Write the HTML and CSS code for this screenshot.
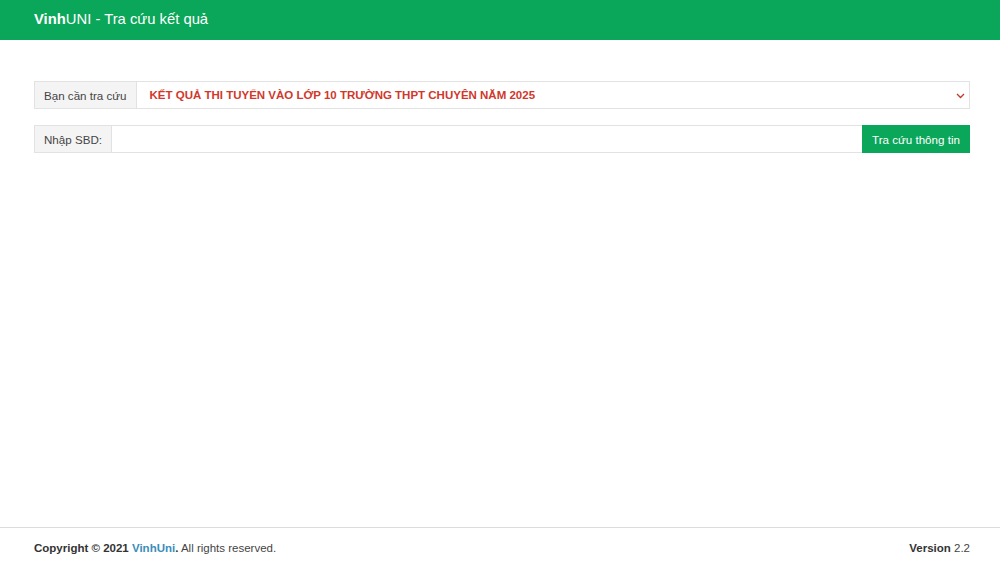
FILE: index.html
```html
<!DOCTYPE html>
<html lang="vi">
<head>
    <meta charset="UTF-8">
    <meta name="viewport" content="width=device-width, initial-scale=1.0">
    <title>VinhUNI - Tra cứu kết quả</title>
    <link rel="stylesheet" href="styles.css">
</head>
<body>
    <div class="page">
        <header class="topbar">
            <div class="brand"><b>Vinh</b>UNI - Tra cứu kết quả</div>
        </header>

        <main class="content">
            <div class="input-group">
                <span class="addon">Bạn cần tra cứu</span>
                <div class="select-box">
                    <span class="select-text">KẾT QUẢ THI TUYỂN VÀO LỚP 10 TRƯỜNG THPT CHUYÊN NĂM 2025</span>
                    <svg class="chevron" width="9" height="6" viewBox="0 0 9 6">
                        <path d="M1 1 L4.5 4.5 L8 1" fill="none" stroke="#c0392b" stroke-width="1.3"/>
                    </svg>
                </div>
            </div>

            <div class="input-group">
                <span class="addon">Nhập SBD:</span>
                <input class="sbd" type="text">
                <button class="btn-search">Tra cứu thông tin</button>
            </div>
        </main>

        <footer class="footer">
            <div class="copy"><b>Copyright &copy; 2021 <span class="link">VinhUni</span>.</b> All rights reserved.</div>
            <div class="version"><b>Version</b> 2.2</div>
        </footer>
    </div>
</body>
</html>
```

FILE: styles.css
```css
* {
    margin: 0;
    padding: 0;
    box-sizing: border-box;
}

body {
    font-family: "Liberation Sans", Arial, sans-serif;
    color: #333;
    background: #fff;
}

.page {
    display: flex;
    flex-direction: column;
    min-height: 100vh;
}

.topbar {
    background: #0aa659;
    height: 40px;
    display: flex;
    align-items: center;
    padding: 0 34px;
}

.brand {
    color: #fff;
    font-size: 14.8px;
    padding-bottom: 3px;
}

.content {
    padding: 41px 30px 0 34px;
}

.input-group {
    display: flex;
    height: 28px;
    margin-bottom: 16px;
}

.addon {
    display: flex;
    align-items: center;
    padding: 0 9px;
    background: #f4f4f4;
    border: 1px solid #e2e2e2;
    font-size: 11.6px;
    color: #444;
    white-space: nowrap;
}

.select-box {
    flex: 1;
    display: flex;
    align-items: center;
    justify-content: space-between;
    border: 1px solid #e2e2e2;
    border-left: none;
    padding: 0 4px 0 13px;
}

.select-text {
    color: #d0382b;
    font-weight: bold;
    font-size: 11.5px;
}

.chevron {
    margin-top: 1px;
}

.sbd {
    flex: 1;
    border: 1px solid #e2e2e2;
    border-left: none;
    border-right: none;
    outline: none;
    font-size: 12px;
    padding: 0 8px;
}

.btn-search {
    background: #0aa659;
    color: #fff;
    border: none;
    font-family: inherit;
    font-size: 11.6px;
    width: 108px;
    white-space: nowrap;
    cursor: pointer;
}

.footer {
    margin-top: auto;
    height: 38px;
    border-top: 1px solid #dcdcdc;
    display: flex;
    align-items: center;
    justify-content: space-between;
    padding: 2px 30px 0 34px;
    font-size: 11.5px;
    color: #444;
}

.footer b {
    color: #333;
}

.footer .link {
    color: #3c8dbc;
}
```
